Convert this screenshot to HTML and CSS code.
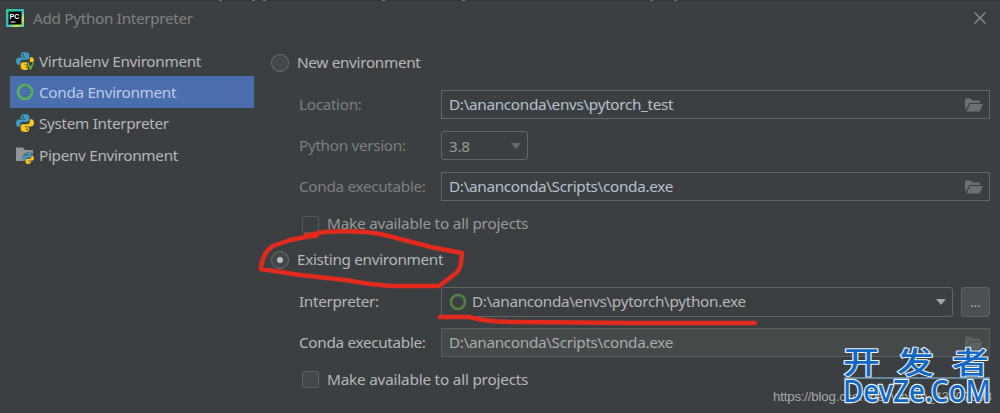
FILE: index.html
```
<!DOCTYPE html>
<html lang="en">
<head>
    <meta charset="UTF-8">
    <title>Add Python Interpreter</title>
    <link rel="stylesheet" href="styles.css">
</head>
<body>
    <svg class="defs" width="0" height="0">
        <symbol id="python" viewBox="0 0 18 18">
            <path fill="#3f9bc4" d="M8.800 0C6.300 0 4.800.9 4.800 2.800V4.800h4.500v.7H3C1.200 5.500 0 7 0 9s1 3.700 2.600 3.700H4.200V10.500c0-1.600 1.200-2.700 2.700-2.700h4.200c1.300 0 2.200-1 2.200-2.200V2.800C13.300 1 11.500 0 8.800 0z"/>
            <path fill="#fcc51c" d="M9.200 18c2.500 0 4-.9 4-2.800v-2H8.700v-.7H15c1.800 0 3-1.500 3-3.500s-1-3.700-2.600-3.700h-1.600v2.200c0 1.600-1.200 2.700-2.700 2.700H6.900c-1.300 0-2.200 1-2.200 2.200v2.800C4.700 17 6.500 18 9.200 18z"/>
            <circle cx="7" cy="2.600" r=".9" fill="#3c3f41"/>
            <circle cx="11" cy="15.400" r=".9" fill="#3c3f41"/>
        </symbol>
        <symbol id="conda" viewBox="0 0 18 18">
            <circle cx="9" cy="9" r="7" fill="none" stroke="currentColor" stroke-width="2.700"/>
            <path d="M9 3.200A5.800 5.800 0 0 1 14 12" fill="none" stroke="#3c5f4c" stroke-opacity=".6" stroke-width="1" stroke-dasharray="2 1"/>
        </symbol>
        <symbol id="folder" viewBox="0 0 18 14">
            <path fill="currentColor" d="M0 .5h6l1.500 2H15v2.500H4.500L1.200 11H0zM5 6h13l-3.500 7.500H1.500z"/>
        </symbol>
    </svg>

    <header class="titlebar">
        <svg class="app-icon" viewBox="0 0 18 18">
            <defs>
                <linearGradient id="pc" x1="0" y1="0" x2="1" y2="1">
                    <stop offset="0" stop-color="#21d789"/>
                    <stop offset=".5" stop-color="#2bb8c5"/>
                    <stop offset=".75" stop-color="#d8e85a"/>
                    <stop offset="1" stop-color="#27d0a0"/>
                </linearGradient>
            </defs>
            <rect width="18" height="18" fill="url(#pc)"/>
            <rect x="2.500" y="2.500" width="13" height="13" fill="#000"/>
            <text x="3.500" y="9.500" class="app-letters">PC</text>
            <path d="M4.500 13h5" stroke="#fff"/>
        </svg>
        <h1 class="title">Add Python Interpreter</h1>
        <svg class="close" viewBox="0 0 12 12"><path d="M.5.5l11 11M11.500.5l-11 11" stroke="#8c8f91" stroke-width="1.300"/></svg>
    </header>

    <main class="content">
        <nav class="sidebar">
            <div class="nav-item">
                <svg class="nav-icon" viewBox="0 0 18 18">
                    <use href="#python"/>
                    <path d="M10.500 8.500H18V18h-5.500z" fill="#3c3f41"/>
                    <path d="M15 6.500l2.500 1.500v2h-4z" fill="#fcc51c"/>
                    <path d="M11.800 10.500l2.700 6.500 2.800-6.500" fill="none" stroke="#62b543" stroke-width="1.500"/>
                </svg>
                <span>Virtualenv Environment</span>
            </div>
            <div class="nav-item selected">
                <svg class="nav-icon"><use href="#conda"/></svg>
                <span>Conda Environment</span>
            </div>
            <div class="nav-item">
                <svg class="nav-icon"><use href="#python"/></svg>
                <span>System Interpreter</span>
            </div>
            <div class="nav-item">
                <svg class="nav-icon" viewBox="0 0 18 18">
                    <path d="M0 1.500h7l2 2.500h8v11H0z" fill="#8e9499"/>
                    <circle cx="12.500" cy="12" r="6" fill="#3c3f41" fill-opacity=".6"/>
                    <use href="#python" x="6.500" y="6.500" width="11.500" height="11.500"/>
                </svg>
                <span>Pipenv Environment</span>
            </div>
        </nav>

        <section class="form">
            <div class="choice"><span class="radio"></span><span class="text">New environment</span></div>
            <div class="row row-location">
                <span class="label dim">Location:</span>
                <div class="field"><span class="text">D:\ananconda\envs\pytorch_test</span><svg class="folder"><use href="#folder"/></svg></div>
            </div>
            <div class="row row-version">
                <span class="label dim">Python version:</span>
                <div class="field select"><span>3.8</span><span class="arrow"></span></div>
            </div>
            <div class="row row-conda">
                <span class="label dim">Conda executable:</span>
                <div class="field"><span class="text">D:\ananconda\Scripts\conda.exe</span><svg class="folder"><use href="#folder"/></svg></div>
            </div>
            <div class="check check-new"><span class="box"></span><span class="text">Make available to all projects</span></div>

            <div class="choice existing"><span class="radio on"></span><span class="text">Existing environment</span></div>
            <div class="row row-interpreter">
                <span class="label">Interpreter:</span>
                <div class="field combo"><svg class="nav-icon"><use href="#conda"/></svg><span class="text">D:\ananconda\envs\pytorch\python.exe</span><span class="arrow"></span></div>
                <button class="more">...</button>
            </div>
            <div class="row row-existing">
                <span class="label">Conda executable:</span>
                <div class="field readonly"><span class="text">D:\ananconda\Scripts\conda.exe</span><svg class="folder"><use href="#folder"/></svg></div>
            </div>
            <div class="check"><span class="box"></span><span>Make available to all projects</span></div>
        </section>
    </main>

    <!-- hand-drawn marks over the form -->
    <svg class="marks" viewBox="0 0 1000 413">
        <path d="M317 233L306 237L290 240L273 246Q262 253 261 269L300 275L345 280L370 284L392 286H439L455 274Q461 268 461 262L462 253L431 247L400 239Q380 233 365 232Q335 230 317 233"/>
        <path d="M306 236L316 235" stroke-width="6"/>
        <path d="M440 317H470Q485 322 515 322L630 323H755"/>
        <path class="specks" d="M219 0h3M252 0h3M263 0h3M382 0h3M462 0h3M650 0h3M674 0h3"/>
    </svg>

    <span class="source">https://blog.csdn.net/weixin_43507693</span>
    <svg class="watermark" viewBox="0 0 160 80">
        <text x="3" y="40" class="wm-cjk">开</text>
        <text x="57" y="40" class="wm-cjk">发</text>
        <text x="112" y="40" class="wm-cjk">者</text>
        <path d="M4 45h146" stroke="#8fd0ff"/>
        <text x="3" y="68.500" class="wm-latin" textLength="148" lengthAdjust="spacingAndGlyphs">DevZe.CoM</text>
    </svg>
</body>
</html>
```
FILE: styles.css
```
* {
    margin: 0;
    padding: 0;
    box-sizing: border-box;
}

body {
    width: 1000px;
    height: 413px;
    overflow: hidden;
    position: relative;
    background: #3c3f41;
    box-shadow: inset 0 1px #343638;
    color: #b4b7b9;
    font-family: 'Noto Sans', 'Open Sans', sans-serif;
    font-size: 15.3px;
    letter-spacing: -0.32px;
    line-height: 20px;
}

.defs {
    position: absolute;
}

.titlebar {
    display: flex;
    align-items: center;
    height: 35px;
    padding: 0 14px 0 6px;
}

.app-icon {
    width: 18px;
    height: 18px;
}

.app-letters {
    font: bold 7px 'Liberation Sans', sans-serif;
    letter-spacing: 0;
    fill: #fff;
}

.title {
    margin-left: 9px;
    font-size: 15.3px;
    font-weight: 400;
    color: #7c7f81;
}

.close {
    width: 12px;
    height: 12px;
    margin-left: auto;
}

.content {
    display: flex;
}

.sidebar {
    width: 244px;
    margin: 10px 0 0 10px;
}

.nav-item {
    display: flex;
    align-items: center;
    gap: 5px;
    height: 31.3px;
    padding-left: 6px;
}

.nav-item.selected {
    background: #4b6eaf;
    color: #bccbe4;
}

.nav-icon {
    width: 18px;
    height: 18px;
    flex-shrink: 0;
    color: #56b35c;
}

.form {
    flex: 1;
    padding: 18px 10px 0 17px;
}

.text {
    padding-bottom: 2px;
}

.choice {
    display: flex;
    align-items: center;
    gap: 8px;
    height: 20px;
}

.radio {
    display: flex;
    align-items: center;
    justify-content: center;
    width: 18px;
    height: 18px;
    border: 1px solid #6b6e70;
    border-radius: 50%;
    background: #43474a;
}

.radio.on::after {
    content: "";
    width: 6px;
    height: 6px;
    border-radius: 50%;
    background: #b9bcbe;
}

.row {
    display: flex;
    align-items: center;
    height: 29px;
    padding-left: 28px;
}

.row-location {
    margin-top: 17px;
}

.row-version,
.row-conda {
    margin-top: 12px;
}

.label {
    width: 142px;
    flex-shrink: 0;
    padding-bottom: 2px;
}

.dim {
    color: #7b7e80;
}

.field {
    display: flex;
    align-items: center;
    flex: 1;
    height: 29px;
    padding: 0 6px 0 7px;
    border: 1px solid #646769;
    color: #b5c2cd;
}

.folder {
    width: 18px;
    height: 14px;
    margin-left: auto;
    color: #6c6f71;
}

.select {
    flex: none;
    width: 87px;
    border-radius: 3px;
    color: #96999b;
}

.arrow {
    margin-left: auto;
    border: 5px solid transparent;
    border-top: 6px solid #67696b;
    border-bottom: 0;
}

.check {
    display: flex;
    align-items: center;
    gap: 8px;
    height: 20px;
    margin-top: 12px;
    padding-left: 31px;
    letter-spacing: -0.2px;
}

.check-new {
    margin-top: 13px;
    color: #979a9c;
}

.box {
    width: 17px;
    height: 17px;
    border: 1px solid #606365;
    border-radius: 2px;
    background: #43474a;
}

.check-new .box {
    background: none;
    border-color: #55585a;
}

.existing {
    margin-top: 16px;
}

.row-interpreter {
    height: 30px;
    margin-top: 17px;
}

.combo {
    height: 30px;
    border-radius: 3px;
    gap: 5px;
    color: #b4b7b9;
}

.combo .nav-icon {
    color: #4f8245;
}

.combo .arrow {
    border-top-color: #a0a3a5;
}

.more {
    width: 29px;
    height: 30px;
    margin-left: 8px;
    border: 1px solid #606365;
    border-radius: 3px;
    background: #4c5052;
    color: #b4b7b9;
    font: 13px 'Noto Sans', sans-serif;
}

.row-existing {
    margin-top: 11px;
}

.readonly {
    background: #45494a;
    border-color: #5b5e60;
    color: #a9acae;
}

.readonly .folder {
    color: #5e6163;
}

.marks {
    position: absolute;
    top: 0;
    left: 0;
    width: 1000px;
    height: 413px;
    fill: none;
    stroke: #e32a1e;
    stroke-width: 4.5;
    stroke-linecap: round;
    stroke-linejoin: round;
}

.marks .specks {
    stroke: #85888a;
    stroke-width: 1.5;
    stroke-linecap: butt;
}

.source {
    position: absolute;
    left: 773px;
    top: 387px;
    color: #a5a7a8;
    font: 13.3px/20px 'Liberation Sans', sans-serif;
    letter-spacing: -0.2px;
}

.watermark {
    position: absolute;
    left: 840px;
    top: 333px;
    width: 160px;
    height: 80px;
    fill: #1268c4;
    stroke: #e8f2fa;
    stroke-width: 2.5;
    stroke-linejoin: round;
    paint-order: stroke;
    letter-spacing: 0;
}

.watermark path {
    stroke-width: 1;
}

.wm-cjk {
    font: 500 37px/1 'Noto Sans CJK SC', sans-serif;
    transform: scaleY(0.8);
    transform-origin: 0 41px;
}

.wm-latin {
    font: 500 30px/1 'Noto Sans', sans-serif;
}
```
